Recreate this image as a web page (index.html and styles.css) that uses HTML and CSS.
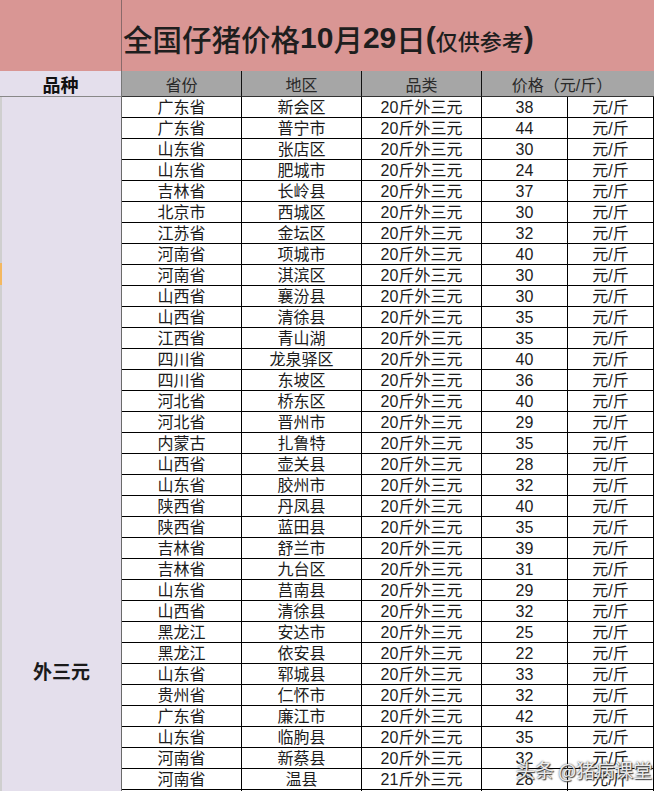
FILE: index.html
```html
<!DOCTYPE html>
<html lang="zh">
<head>
<meta charset="utf-8">
<link rel="stylesheet" href="styles.css">
</head>
<body>
<div class="sheet">
  <div class="corner"></div>
  <div class="title"><span class="t-cn">全国仔猪价格</span><span class="t-num">10</span><span class="t-cn">月</span><span class="t-num">29</span><span class="t-cn">日</span><span class="t-num">(</span><span class="t-small">仅供参考</span><span class="t-num">)</span></div>

  <div class="h-kind">品种</div>
  <div class="hd">省份</div>
  <div class="hd">地区</div>
  <div class="hd">品类</div>
  <div class="hd hd-price">价格（元/斤）</div>

  <div class="kind">外三元</div>

  <div class="c">广东省</div><div class="c">新会区</div><div class="c">20斤外三元</div><div class="c">38</div><div class="c">元/斤</div>
  <div class="c">广东省</div><div class="c">普宁市</div><div class="c">20斤外三元</div><div class="c">44</div><div class="c">元/斤</div>
  <div class="c">山东省</div><div class="c">张店区</div><div class="c">20斤外三元</div><div class="c">30</div><div class="c">元/斤</div>
  <div class="c">山东省</div><div class="c">肥城市</div><div class="c">20斤外三元</div><div class="c">24</div><div class="c">元/斤</div>
  <div class="c">吉林省</div><div class="c">长岭县</div><div class="c">20斤外三元</div><div class="c">37</div><div class="c">元/斤</div>
  <div class="c">北京市</div><div class="c">西城区</div><div class="c">20斤外三元</div><div class="c">30</div><div class="c">元/斤</div>
  <div class="c">江苏省</div><div class="c">金坛区</div><div class="c">20斤外三元</div><div class="c">32</div><div class="c">元/斤</div>
  <div class="c">河南省</div><div class="c">项城市</div><div class="c">20斤外三元</div><div class="c">40</div><div class="c">元/斤</div>
  <div class="c">河南省</div><div class="c">淇滨区</div><div class="c">20斤外三元</div><div class="c">30</div><div class="c">元/斤</div>
  <div class="c">山西省</div><div class="c">襄汾县</div><div class="c">20斤外三元</div><div class="c">30</div><div class="c">元/斤</div>
  <div class="c">山西省</div><div class="c">清徐县</div><div class="c">20斤外三元</div><div class="c">35</div><div class="c">元/斤</div>
  <div class="c">江西省</div><div class="c">青山湖</div><div class="c">20斤外三元</div><div class="c">35</div><div class="c">元/斤</div>
  <div class="c">四川省</div><div class="c">龙泉驿区</div><div class="c">20斤外三元</div><div class="c">40</div><div class="c">元/斤</div>
  <div class="c">四川省</div><div class="c">东坡区</div><div class="c">20斤外三元</div><div class="c">36</div><div class="c">元/斤</div>
  <div class="c">河北省</div><div class="c">桥东区</div><div class="c">20斤外三元</div><div class="c">40</div><div class="c">元/斤</div>
  <div class="c">河北省</div><div class="c">晋州市</div><div class="c">20斤外三元</div><div class="c">29</div><div class="c">元/斤</div>
  <div class="c">内蒙古</div><div class="c">扎鲁特</div><div class="c">20斤外三元</div><div class="c">35</div><div class="c">元/斤</div>
  <div class="c">山西省</div><div class="c">壶关县</div><div class="c">20斤外三元</div><div class="c">28</div><div class="c">元/斤</div>
  <div class="c">山东省</div><div class="c">胶州市</div><div class="c">20斤外三元</div><div class="c">32</div><div class="c">元/斤</div>
  <div class="c">陕西省</div><div class="c">丹凤县</div><div class="c">20斤外三元</div><div class="c">40</div><div class="c">元/斤</div>
  <div class="c">陕西省</div><div class="c">蓝田县</div><div class="c">20斤外三元</div><div class="c">35</div><div class="c">元/斤</div>
  <div class="c">吉林省</div><div class="c">舒兰市</div><div class="c">20斤外三元</div><div class="c">39</div><div class="c">元/斤</div>
  <div class="c">吉林省</div><div class="c">九台区</div><div class="c">20斤外三元</div><div class="c">31</div><div class="c">元/斤</div>
  <div class="c">山东省</div><div class="c">莒南县</div><div class="c">20斤外三元</div><div class="c">29</div><div class="c">元/斤</div>
  <div class="c">山西省</div><div class="c">清徐县</div><div class="c">20斤外三元</div><div class="c">32</div><div class="c">元/斤</div>
  <div class="c">黑龙江</div><div class="c">安达市</div><div class="c">20斤外三元</div><div class="c">25</div><div class="c">元/斤</div>
  <div class="c">黑龙江</div><div class="c">依安县</div><div class="c">20斤外三元</div><div class="c">22</div><div class="c">元/斤</div>
  <div class="c">山东省</div><div class="c">郓城县</div><div class="c">20斤外三元</div><div class="c">33</div><div class="c">元/斤</div>
  <div class="c">贵州省</div><div class="c">仁怀市</div><div class="c">20斤外三元</div><div class="c">32</div><div class="c">元/斤</div>
  <div class="c">广东省</div><div class="c">廉江市</div><div class="c">20斤外三元</div><div class="c">42</div><div class="c">元/斤</div>
  <div class="c">山东省</div><div class="c">临朐县</div><div class="c">20斤外三元</div><div class="c">35</div><div class="c">元/斤</div>
  <div class="c">河南省</div><div class="c">新蔡县</div><div class="c">20斤外三元</div><div class="c">32</div><div class="c">元/斤</div>
  <div class="c">河南省</div><div class="c">温县</div><div class="c">21斤外三元</div><div class="c">28</div><div class="c">元/斤</div>
  <div class="c"></div><div class="c"></div><div class="c"></div><div class="c"></div><div class="c"></div>

  <span class="sel-mark"></span>
  <div class="watermark">头条 @猪病课堂</div>
</div>
</body>
</html>
```

FILE: styles.css
```css
html, body {
  margin: 0;
  padding: 0;
  background: #ffffff;
  overflow: hidden;
}

.sheet {
  position: relative;
  width: 654px;
  display: grid;
  grid-template-columns: 122px 120px 120px 120px 86px 86px;
  grid-template-rows: 71px 26px repeat(34, 21px);
  font-family: "Liberation Sans", "Noto Sans CJK SC", sans-serif;
  color: #1c1c1c;
}

.sheet > div {
  box-sizing: border-box;
}

.corner {
  background: #d99694;
  border-right: 1px solid #8a6a6a;
}

.title {
  grid-column: 2 / span 5;
  background: #d99694;
  display: flex;
  align-items: center;
  padding: 4px 0 0 1px;
  color: #1e1e1e;
  white-space: nowrap;
}

.t-cn {
  font-family: "Noto Sans CJK SC", sans-serif;
  font-size: 29.5px;
  font-weight: 500;
}

.t-num {
  font-family: "Liberation Sans", sans-serif;
  font-size: 30px;
  font-weight: bold;
}

.t-small {
  font-family: "Noto Sans CJK SC", sans-serif;
  font-size: 22px;
  font-weight: 500;
  padding-top: 5px;
}

.h-kind {
  background: #e4dfec;
  border-right: 1px solid #777;
  border-bottom: 1px solid #888;
  display: flex;
  align-items: center;
  justify-content: center;
  font-family: "Noto Sans CJK SC", sans-serif;
  font-weight: bold;
  font-size: 18px;
  color: #111;
}

.hd {
  background: #a6a6a6;
  border-right: 1px solid #111;
  border-bottom: 1px solid #333;
  display: flex;
  align-items: center;
  justify-content: center;
  font-size: 16px;
  color: #2a2a2a;
}

.hd-price {
  grid-column: span 2;
  border-right: none;
  padding-right: 12px;
}

.kind {
  grid-column: 1;
  grid-row: 3 / span 34;
  background: #e4dfec;
  border-right: 1px solid #6a6a6a;
  border-left: 2px solid #cfcfcf;
  display: flex;
  justify-content: center;
  align-items: flex-start;
  padding-top: 560px;
  font-family: "Noto Sans CJK SC", sans-serif;
  font-weight: bold;
  font-size: 19px;
  color: #1a1a1a;
}

.c {
  border-right: 1px solid #000;
  border-bottom: 1px solid #000;
  display: flex;
  align-items: center;
  justify-content: center;
  font-size: 16px;
  line-height: 1;
  white-space: nowrap;
  padding-top: 1px;
}

.sel-mark {
  position: absolute;
  left: 0;
  top: 263px;
  width: 2px;
  height: 22px;
  background: #f4b860;
}

.watermark {
  position: absolute;
  left: 516px;
  top: 756px;
  font-family: "Noto Sans CJK SC", sans-serif;
  font-size: 19px;
  color: rgba(255, 255, 255, 0.9);
  text-shadow: 0 0 2px #333, 1px 1px 1px #444;
  white-space: nowrap;
}
```
